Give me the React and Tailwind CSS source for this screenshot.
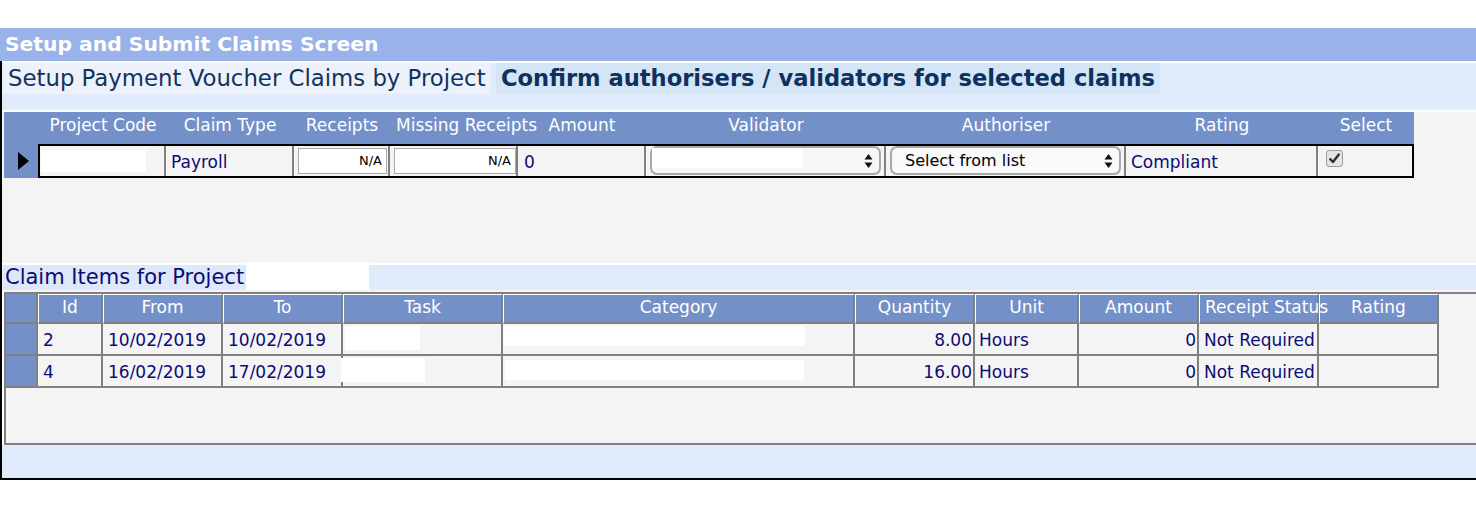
import React from 'react';

const navy = 'text-[#0c0c74]';

const SelectArrows = () => (
  <svg width="9" height="16" viewBox="0 0 9 16" className="shrink-0">
    <polygon points="4.5,1 8.5,6.5 0.5,6.5" fill="#111" />
    <polygon points="0.5,9.5 8.5,9.5 4.5,15" fill="#111" />
  </svg>
);

const CheckedBox = () => (
  <div className="w-[17px] h-[17px] rounded-[3px] border border-[#9c9c9c] bg-[#e4e4e4] flex items-center justify-center">
    <svg width="13" height="13" viewBox="0 0 13 13">
      <path d="M2.2 7.2 L5 10 L10.8 2.6" stroke="#2e2e2e" strokeWidth="2.4" fill="none" strokeLinecap="round" strokeLinejoin="round" />
    </svg>
  </div>
);

// claim header grid: width of each column incl. its 2px divider
const claimCols = [
  { label: 'Project Code', w: 'w-[126px]' },
  { label: 'Claim Type', w: 'w-[128px]' },
  { label: 'Receipts', w: 'w-[96px]' },
  { label: 'Missing Receipts', w: 'w-[128px]' },
  { label: 'Amount', w: 'w-[128px]' },
  { label: 'Validator', w: 'w-[240px]' },
  { label: 'Authoriser', w: 'w-[240px]' },
  { label: 'Rating', w: 'w-[192px]' },
  { label: 'Select', w: 'w-[96px]' },
];

const itemCols = [
  { label: 'Id', w: 'w-[65px]' },
  { label: 'From', w: 'w-[120px]' },
  { label: 'To', w: 'w-[120px]' },
  { label: 'Task', w: 'w-[160px]' },
  { label: 'Category', w: 'w-[352px]' },
  { label: 'Quantity', w: 'w-[120px]' },
  { label: 'Unit', w: 'w-[104px]' },
  { label: 'Amount', w: 'w-[120px]' },
  { label: 'Receipt Status', w: 'w-[120px]' },
  { label: 'Rating', w: 'w-[120px]' },
];

const items = [
  { id: '2', from: '10/02/2019', to: '10/02/2019', task: 'w-[75px] ml-[2px]', cat: 'w-[302px] mt-[2px]', qty: '8.00', unit: 'Hours', amount: '0', status: 'Not Required' },
  { id: '4', from: '16/02/2019', to: '17/02/2019', task: 'w-[84px] -ml-[2px]', cat: 'w-[299px] ml-[2px] mt-[4px]', qty: '16.00', unit: 'Hours', amount: '0', status: 'Not Required' },
];

const SmallInput = ({ w }) => (
  <div className={`${w} h-[26px] ml-[4px] mt-[2px] bg-white border border-[#a8a8a8] flex items-center justify-end pr-[4px] text-[13px] text-black`}>
    N/A
  </div>
);

const ClaimsTable = () => (
  <div className="ml-[2px] w-[1410px]">
    <div className="flex h-[32px] bg-[#7490c8] text-white text-[17px] leading-[24px] pt-[1px]">
      <div className="w-[36px]" />
      {claimCols.map((c) => (
        <div key={c.label} className={`${c.w} px-[6px] text-center whitespace-nowrap`}>
          {c.label}
        </div>
      ))}
    </div>
    <div className="flex h-[34px]">
      <div className="w-[34px] bg-[#7490c8] flex items-center pl-[14px]">
        <svg width="11" height="18" viewBox="0 0 11 18">
          <polygon points="0,0 11,9 0,18" fill="#000" />
        </svg>
      </div>
      <div className={`flex border-2 border-black bg-[#f4f4f4] text-[17px] leading-[22px] ${navy}`}>
        <div className="w-[126px] border-r-2 border-[#808080] pt-[4px] pl-[1px]">
          <div className="w-[105px] h-[22px] bg-white" />
        </div>
        <div className="w-[128px] border-r-2 border-[#808080] flex items-center pl-[5px] pt-[2px]">Payroll</div>
        <div className="w-[96px] border-r-2 border-[#808080]">
          <SmallInput w="w-[89px]" />
        </div>
        <div className="w-[128px] border-r-2 border-[#808080]">
          <SmallInput w="w-[122px]" />
        </div>
        <div className="w-[128px] border-r-2 border-[#808080] flex items-center pl-[6px] pt-[2px]">0</div>
        <div className="w-[240px] border-r-2 border-[#808080] pl-[4px]">
          <div className="relative w-[231px] h-[29px] rounded-[7px] border-2 border-[#a9a9a9] bg-[#f7f7f7] flex items-center justify-end pr-[6px]">
            <div className="absolute left-0 top-0 w-[150px] h-[20px] bg-white" />
            <SelectArrows />
          </div>
        </div>
        <div className="w-[240px] border-r-2 border-[#808080] pl-[4px]">
          <div className="w-[231px] h-[29px] rounded-[7px] border-2 border-[#a9a9a9] bg-[#f9f9f9] flex items-center justify-between pl-[13px] pr-[6px] text-[16px] text-black">
            <span>Select from list</span>
            <SelectArrows />
          </div>
        </div>
        <div className="w-[192px] border-r-2 border-[#808080] flex items-center pl-[5px] pt-[2px]">Compliant</div>
        <div className="w-[94px] pl-[8px] pt-[4px]">
          <CheckedBox />
        </div>
      </div>
    </div>
  </div>
);

const ItemsGrid = () => (
  <div className="ml-[2px] h-[153px] border-l-2 border-t-2 border-b-2 border-[#808080] bg-[#f4f4f4]">
    <div className="flex h-[30px] text-white text-[17px] leading-[24px]">
      <div className="w-[32px] bg-[#7490c8] border-r-2 border-b-2 border-[#808080]" />
      {itemCols.map((c) => (
        <div
          key={c.label}
          className={`${c.w} bg-[#7490c8] border-l border-t border-white border-r-2 border-r-[#808080] border-b-2 border-b-[#808080] px-[5px] text-center whitespace-nowrap`}
        >
          <span className="relative z-10">{c.label}</span>
        </div>
      ))}
    </div>
    {items.map((r) => (
      <div key={r.id} className={`flex h-[32px] text-[17px] leading-[22px] ${navy}`}>
        <div className="w-[32px] bg-[#7490c8] border-r-2 border-b-2 border-[#808080]" />
        <div className="w-[65px] border-r-2 border-b-2 border-[#808080] flex items-center pl-[5px] pt-[2px]">{r.id}</div>
        <div className="w-[120px] border-r-2 border-b-2 border-[#808080] flex items-center pl-[5px] pt-[2px]">{r.from}</div>
        <div className="w-[120px] border-r-2 border-b-2 border-[#808080] flex items-center pl-[5px] pt-[2px]">{r.to}</div>
        <div className="w-[160px] border-r-2 border-b-2 border-[#808080] pt-[2px]">
          <div className={`${r.task} h-[24px] bg-white`} />
        </div>
        <div className="w-[352px] border-r-2 border-b-2 border-[#808080]">
          <div className={`${r.cat} h-[20px] bg-white`} />
        </div>
        <div className="w-[120px] border-r-2 border-b-2 border-[#808080] flex items-center justify-end pr-[1px] pt-[2px]">{r.qty}</div>
        <div className="w-[104px] border-r-2 border-b-2 border-[#808080] flex items-center pl-[4px] pt-[2px]">{r.unit}</div>
        <div className="w-[120px] border-r-2 border-b-2 border-[#808080] flex items-center justify-end pr-[1px] pt-[2px]">{r.amount}</div>
        <div className="w-[120px] border-r-2 border-b-2 border-[#808080] flex items-center pl-[5px] pt-[2px] whitespace-nowrap">{r.status}</div>
        <div className="w-[120px] border-r-2 border-b-2 border-[#808080]" />
      </div>
    ))}
  </div>
);

export default function App() {
  return (
    <div className="w-[1476px] overflow-hidden bg-white font-['DejaVu_Sans',Verdana,sans-serif] pt-[28px] pb-[30px]">
      <div className="h-[33px] bg-[#99b3ea] flex items-center px-[5px] text-white font-bold text-[20.3px] leading-none">
        Setup and Submit Claims Screen
      </div>
      <div className="border-l-2 border-b-2 border-black">
        <div className="h-[49px] bg-[#e0ebfc] border-t-2 border-white flex items-start">
          <div className="ml-[1px] h-[31px] w-[487px] bg-[#edf2fa] px-[5px] flex items-center text-[22.8px] text-[#12335f] whitespace-nowrap">
            Setup Payment Voucher Claims by Project
          </div>
          <div className="ml-[6px] h-[31px] w-[664px] bg-[#d4e5f5] px-[5px] flex items-center text-[22.6px] font-bold text-[#0f3160] whitespace-nowrap">
            Confirm authorisers / validators for selected claims
          </div>
        </div>
        <div className="h-[153px] bg-[#f4f4f4] border-t-2 border-white">
          <ClaimsTable />
        </div>
        <div className="h-[27px] bg-[#e0ebfc] border-t-2 border-white flex items-stretch">
          <div className={`ml-[2px] pl-[1px] pr-[2px] bg-[#dde8fa] flex items-center text-[21px] ${navy} whitespace-nowrap`}>
            Claim Items for Project
          </div>
          <div className="w-[123px] -mt-[3px] bg-white" />
        </div>
        <div className="h-[2px] bg-[#f4f4f4]" />
        <ItemsGrid />
        <div className="h-[33px] bg-[#e0ebfc]" />
      </div>
    </div>
  );
}
